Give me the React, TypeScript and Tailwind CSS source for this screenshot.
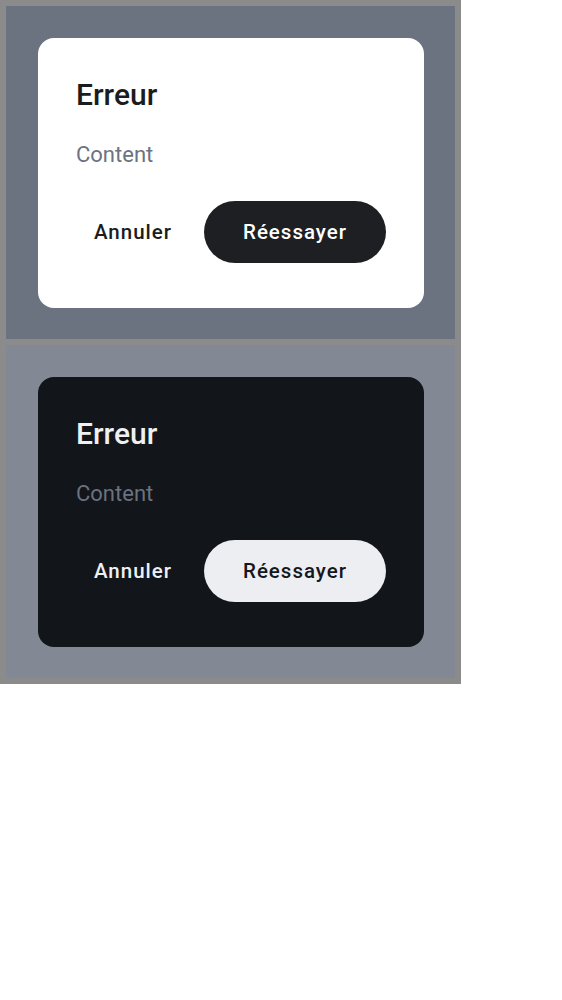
import React from "react";

function Dialog({ dark }: { dark: boolean }) {
  return (
    <div
      className={
        "w-[386px] h-[270px] rounded-[16px] pt-[39px] pl-[38px] pr-[38px] flex flex-col " +
        (dark ? "bg-[#121519]" : "bg-white")
      }
    >
      <div
        className={
          "text-[30px] leading-[36px] font-medium " +
          (dark ? "text-[#eef0f3]" : "text-[#1b1c20]")
        }
      >
        Erreur
      </div>
      <div
        className={
          "mt-[28px] text-[22px] leading-[28px] " +
          (dark ? "text-[#6b7280]" : "text-[#6b7280]")
        }
      >
        Content
      </div>
      <div className="mt-[32px] flex justify-end gap-[14px]">
        <button
          className={
            "shrink-0 w-[114px] h-[62px] rounded-full flex items-center justify-center text-[20.5px] font-medium tracking-[1px] " +
            (dark ? "text-[#eef0f3]" : "text-[#1b1c20]")
          }
        >
          Annuler
        </button>
        <button
          className={
            "shrink-0 w-[182px] h-[62px] rounded-full flex items-center justify-center text-[20.5px] font-medium tracking-[1px] " +
            (dark ? "bg-[#eceef2] text-[#15171b]" : "bg-[#1e1f23] text-white")
          }
        >
          Réessayer
        </button>
      </div>
    </div>
  );
}

export default function App() {
  return (
    <div
      className="w-[461px] bg-[#8b8b8b] p-[6px] flex flex-col gap-[6px]"
      style={{ fontFamily: "Roboto, 'Liberation Sans', sans-serif" }}
    >
      <div className="bg-[#6b7280] pt-8 pb-[31px] px-8">
        <Dialog dark={false} />
      </div>
      <div className="bg-[#838994] pt-8 pb-[31px] px-8">
        <Dialog dark={true} />
      </div>
    </div>
  );
}
